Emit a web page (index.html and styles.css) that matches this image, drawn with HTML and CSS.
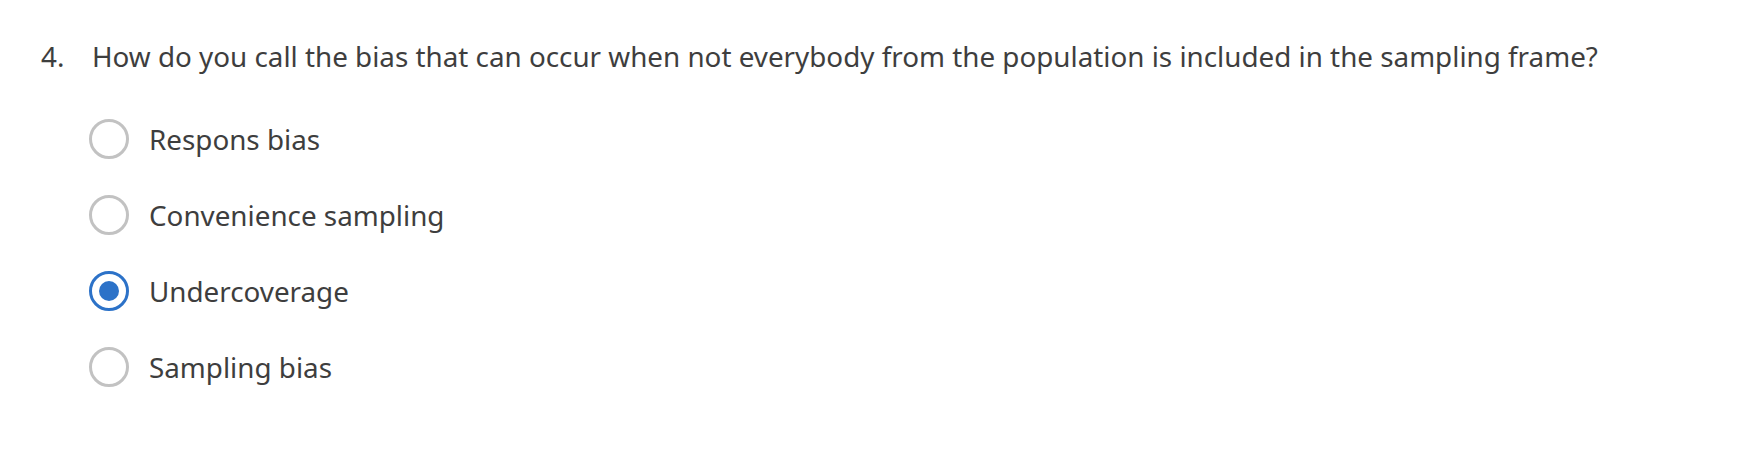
FILE: index.html
```html
<!DOCTYPE html>
<html lang="en">
<head>
<meta charset="utf-8">
<title>Question 4</title>
<link rel="stylesheet" href="styles.css">
</head>
<body>
<div class="question">
  <div class="question-title">
    <span class="q-num">4.</span>
    <span class="q-text">How do you call the bias that can occur when not everybody from the population is included in the sampling frame?</span>
  </div>
  <div class="choices">
    <label class="choice">
      <span class="radio"></span>
      <span class="choice-text">Respons bias</span>
    </label>
    <label class="choice">
      <span class="radio"></span>
      <span class="choice-text">Convenience sampling</span>
    </label>
    <label class="choice">
      <span class="radio checked"></span>
      <span class="choice-text">Undercoverage</span>
    </label>
    <label class="choice">
      <span class="radio"></span>
      <span class="choice-text">Sampling bias</span>
    </label>
  </div>
</div>
</body>
</html>
```
FILE: styles.css
```css
html, body {
  margin: 0;
  padding: 0;
  background: #ffffff;
}
body {
  font-family: "Noto Sans", "Open Sans", sans-serif;
  color: #3e3e3e;
  font-size: 27.8px;
  font-weight: 400;
}
.question {
  padding: 36px 0 0 41px;
}
.question-title {
  display: flex;
  align-items: baseline;
  line-height: 40px;
}
.q-num {
  width: 51px;
  flex: none;
}
.choices {
  display: flex;
  flex-direction: column;
  padding-left: 48px;
  padding-top: 25px;
}
.choice {
  display: flex;
  align-items: center;
  height: 76px;
  gap: 20px;
}
.radio {
  width: 40px;
  height: 40px;
  box-sizing: border-box;
  border: 3.5px solid #c2c2c2;
  border-radius: 50%;
  flex: none;
  display: flex;
  align-items: center;
  justify-content: center;
}
.radio.checked {
  border-color: #2c72c8;
}
.radio.checked::after {
  content: "";
  width: 20px;
  height: 20px;
  border-radius: 50%;
  background: #2c72c8;
}
```
